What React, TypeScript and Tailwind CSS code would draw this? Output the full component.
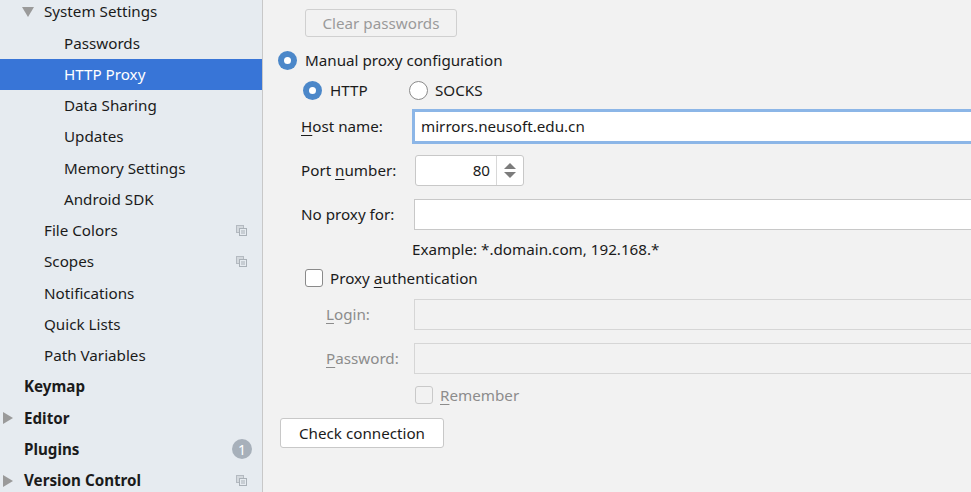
import React from "react";

type Item = {
  label: string;
  indent: number;
  bold?: boolean;
  arrow?: "down" | "right";
  selected?: boolean;
  copy?: boolean;
  badge?: string;
};

const items: Item[] = [
  { label: "System Settings", indent: 44, arrow: "down" },
  { label: "Passwords", indent: 64 },
  { label: "HTTP Proxy", indent: 64, selected: true },
  { label: "Data Sharing", indent: 64 },
  { label: "Updates", indent: 64 },
  { label: "Memory Settings", indent: 64 },
  { label: "Android SDK", indent: 64 },
  { label: "File Colors", indent: 44, copy: true },
  { label: "Scopes", indent: 44, copy: true },
  { label: "Notifications", indent: 44 },
  { label: "Quick Lists", indent: 44 },
  { label: "Path Variables", indent: 44 },
  { label: "Keymap", indent: 24, bold: true },
  { label: "Editor", indent: 24, bold: true, arrow: "right" },
  { label: "Plugins", indent: 24, bold: true, badge: "1" },
  { label: "Version Control", indent: 24, bold: true, arrow: "right", copy: true },
];

function CopyIcon() {
  return (
    <svg width="11" height="11" viewBox="0 0 11 11" className="shrink-0">
      <rect x="0.5" y="0.5" width="7" height="7" fill="#d3d8dd" stroke="#b4bac1" />
      <rect x="3.5" y="3.5" width="7" height="7" fill="#e6ebf0" stroke="#a9b0b7" />
      <line x1="5" y1="6" x2="9" y2="6" stroke="#a9b0b7" />
      <line x1="5" y1="8" x2="9" y2="8" stroke="#a9b0b7" />
    </svg>
  );
}

function Sidebar() {
  return (
    <div className="w-[263px] shrink-0 bg-[#e6ebf0] border-r border-[#c8c8c8] overflow-hidden">
      <div className="-mt-[4px]">
        {items.map((it) => (
          <div
            key={it.label}
            className={`relative flex items-center h-[31.27px] pr-[15px] ${it.selected ? "bg-[#3875d7] text-white" : "text-[#1b1b1b]"}`}
            style={{ paddingLeft: it.indent }}
          >
            {it.arrow === "down" && (
              <span className="absolute left-[22px] top-[11px] w-0 h-0 border-l-[6px] border-r-[6px] border-t-[10px] border-l-transparent border-r-transparent border-t-[#9a9a9a]" />
            )}
            {it.arrow === "right" && (
              <span className="absolute left-[3px] top-[10px] w-0 h-0 border-t-[6px] border-b-[6px] border-l-[10px] border-t-transparent border-b-transparent border-l-[#9a9a9a]" />
            )}
            <span className={`flex-1 ${it.bold ? "font-bold" : ""}`}>{it.label}</span>
            {it.copy && <CopyIcon />}
            {it.badge && (
              <span className="w-[20px] h-[20px] -mr-[5px] rounded-full bg-[#a7b0ba] text-white text-[14px] flex items-center justify-center">
                {it.badge}
              </span>
            )}
          </div>
        ))}
      </div>
    </div>
  );
}

function Radio({ checked }: { checked?: boolean }) {
  return checked ? (
    <span className="w-[19px] h-[19px] rounded-full bg-[#4b87c9] flex items-center justify-center shrink-0">
      <span className="w-[7px] h-[7px] rounded-full bg-white" />
    </span>
  ) : (
    <span className="w-[19px] h-[19px] rounded-full bg-white border border-[#8a8a8a] shrink-0" />
  );
}

function Check({ disabled }: { disabled?: boolean }) {
  return (
    <span
      className={`w-[18px] h-[18px] rounded-[3px] border shrink-0 ${disabled ? "border-[#c9c9c9] bg-[#f2f2f2]" : "border-[#8a8a8a] bg-white"}`}
    />
  );
}

function U({ children }: { children: React.ReactNode }) {
  return <span className="underline underline-offset-[3px]">{children}</span>;
}

export default function App() {
  return (
    <div
      className="w-[971px] h-[492px] flex overflow-hidden bg-[#f2f2f2] text-[15.2px] text-[#1b1b1b]"
      style={{ fontFamily: '"Noto Sans", "Open Sans", sans-serif' }}
    >
      <Sidebar />
      <div className="flex-1 flex flex-col">
        <div className="pt-[9px] pl-[42px]">
          <div className="w-[152px] h-[28px] rounded-[3px] border border-[#d0d0d0] bg-[#f2f2f2] text-[#9a9a9a] flex items-center justify-center">
            Clear passwords
          </div>
        </div>

        <div className="mt-[8px] h-[30px] pl-[15px] flex items-center gap-[8px]">
          <Radio checked />
          <span>Manual proxy configuration</span>
        </div>

        <div className="h-[30px] pl-[40px] flex items-center">
          <Radio checked />
          <span className="ml-[8px] w-[79px]">HTTP</span>
          <Radio />
          <span className="ml-[7px]">SOCKS</span>
        </div>

        <div className="mt-[4px] h-[35px] pl-[38px] flex items-center">
          <span className="w-[111px]">
            <U>H</U>ost name:
          </span>
          <div className="flex-1 h-[35px] border-[3px] border-[#8cb6e7] bg-white flex items-center pl-[6px] -mr-[4px]">
            mirrors.neusoft.edu.cn
          </div>
        </div>

        <div className="mt-[11px] h-[30px] pl-[38px] flex items-center">
          <span className="w-[114px]">
            Port <U>n</U>umber:
          </span>
          <div className="w-[109px] h-[31px] rounded-[3px] border border-[#c8c8c8] bg-white flex">
            <span className="flex-1 flex items-center justify-end pr-[6px]">80</span>
            <span className="w-[27px] border-l border-[#d8d8d8] flex flex-col items-center justify-center gap-[3px]">
              <span className="w-0 h-0 border-l-[6px] border-r-[6px] border-b-[6px] border-l-transparent border-r-transparent border-b-[#7c7c7c]" />
              <span className="w-0 h-0 border-l-[6px] border-r-[6px] border-t-[6px] border-l-transparent border-r-transparent border-t-[#7c7c7c]" />
            </span>
          </div>
        </div>

        <div className="mt-[14px] h-[31px] pl-[38px] flex items-center">
          <span className="w-[113px]">No proxy for:</span>
          <div className="flex-1 h-[31px] border border-[#c8c8c8] border-r-0 bg-white" />
        </div>

        <div className="mt-[8px] h-[22px] pl-[149px] flex items-center">
          Example: *.domain.com, 192.168.*
        </div>

        <div className="mt-[9px] h-[18px] pl-[42px] flex items-center gap-[7px]">
          <Check />
          <span>
            Proxy <U>a</U>uthentication
          </span>
        </div>

        <div className="mt-[12px] h-[31px] pl-[63px] flex items-center text-[#8c8c8c]">
          <span className="w-[88px]">
            <U>L</U>ogin:
          </span>
          <div className="flex-1 h-[31px] border border-[#d6d6d6] border-r-0 bg-[#f2f2f2]" />
        </div>

        <div className="mt-[13px] h-[31px] pl-[63px] flex items-center text-[#8c8c8c]">
          <span className="w-[88px]">
            <U>P</U>assword:
          </span>
          <div className="flex-1 h-[31px] border border-[#d6d6d6] border-r-0 bg-[#f2f2f2]" />
        </div>

        <div className="mt-[12px] h-[18px] pl-[152px] flex items-center gap-[7px] text-[#8c8c8c]">
          <Check disabled />
          <span>
            <U>R</U>emember
          </span>
        </div>

        <div className="mt-[14px] pl-[17px]">
          <div className="w-[164px] h-[30px] rounded-[3px] border border-[#c8c8c8] bg-white flex items-center justify-center">
            Check connection
          </div>
        </div>
      </div>
    </div>
  );
}
